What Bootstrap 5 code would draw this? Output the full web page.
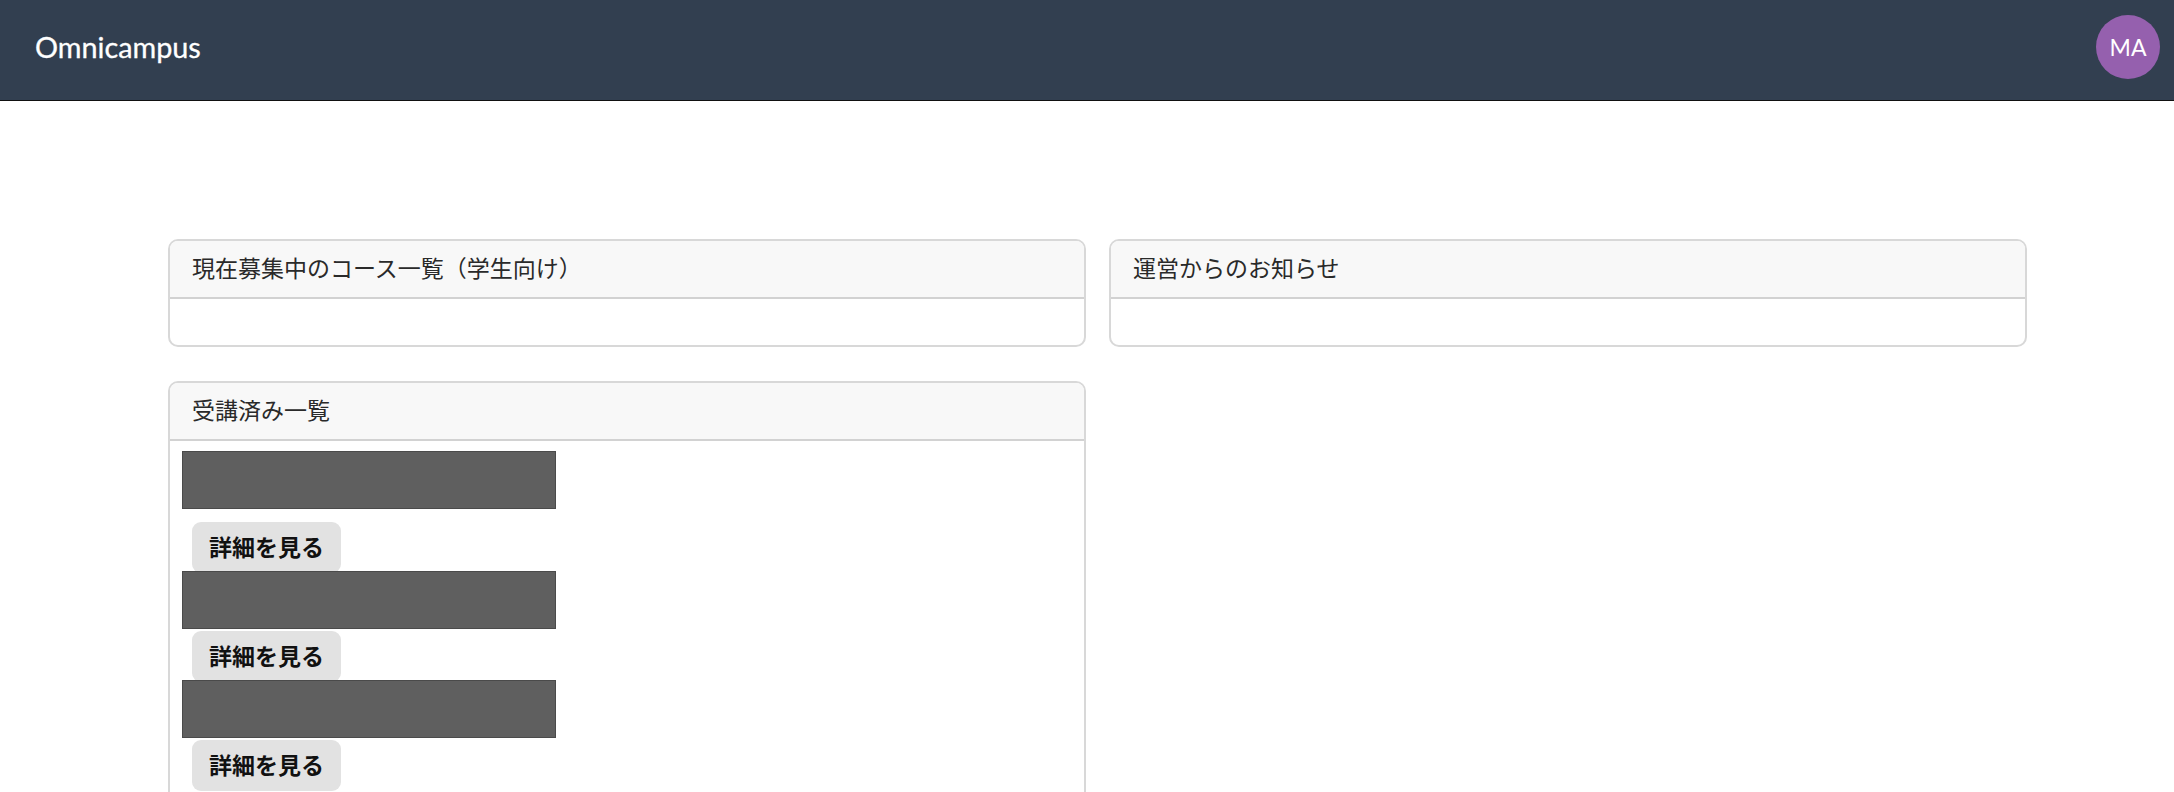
<!DOCTYPE html>
<html lang="ja">
<head>
<meta charset="utf-8">
<title>Omnicampus</title>
<link href="https://cdn.jsdelivr.net/npm/bootstrap@5.3.0/dist/css/bootstrap.min.css" rel="stylesheet">
<style>
html,body{height:792px;overflow:hidden}
body{font-family:"Lato","Noto Sans CJK JP",sans-serif;color:#212529;background:#fff}
.top-bar{height:101px;background:#323f50;border-bottom:1px solid #111;padding:0 14px 6px 35px}
.brand-name{color:#fff;font-size:28.8px;font-weight:400;padding:0;margin:2px 0 0;-webkit-text-stroke:.3px #fff}
.user-dot{width:64px;height:64px;background:#9560ae;color:#fff;font-size:23px;font-weight:400}
.page-wrap{padding:138px 147px 0 168px}
.page-grid{--bs-gutter-x:23px;--bs-gutter-y:34px}
.panel{border:2px solid #d8d8d8;border-radius:10px;--bs-card-border-color:#d8d8d8}
.panel-head{height:58px;padding:0 22px;font-size:23px;line-height:55px;font-weight:400;color:#2a2a2a;background:#f8f8f8;border-bottom:2px solid #d2d2d2;border-radius:8px 8px 0 0!important}
.panel-blank{height:46px}
.panel-body{padding:10px 12px 24px}
.thumb{width:374px;height:57.5px;background:#5f5f5f;border:1px solid #4a4a4a}
.thumb-next{margin-top:-2px}
.go-btn{display:block;width:149px;height:51px;margin-left:10px;padding:0;background:#e2e2e2;border:0;border-radius:9px;color:#111;font-size:23px;font-weight:700;line-height:51px}
.go-btn:hover{background:#e2e2e2;color:#111}
.gap-big{margin-top:13.5px}
.gap-small{margin-top:2.5px}
</style>
</head>
<body>
<nav class="navbar top-bar d-flex justify-content-between align-items-center flex-nowrap">
  <a class="navbar-brand brand-name" href="#">Omnicampus</a>
  <div class="user-dot rounded-circle d-flex align-items-center justify-content-center">MA</div>
</nav>
<main class="page-wrap">
  <div class="row page-grid">
    <div class="col-6">
      <div class="card panel">
        <div class="card-header panel-head">現在募集中のコース一覧（学生向け）</div>
        <div class="card-body panel-blank p-0"></div>
      </div>
    </div>
    <div class="col-6">
      <div class="card panel">
        <div class="card-header panel-head">運営からのお知らせ</div>
        <div class="card-body panel-blank p-0"></div>
      </div>
    </div>
    <div class="col-6">
      <div class="card panel">
        <div class="card-header panel-head">受講済み一覧</div>
        <div class="card-body panel-body">
          <div class="thumb"></div>
          <a class="btn go-btn gap-big" href="#">詳細を見る</a>
          <div class="thumb thumb-next"></div>
          <a class="btn go-btn gap-small" href="#">詳細を見る</a>
          <div class="thumb thumb-next"></div>
          <a class="btn go-btn gap-small" href="#">詳細を見る</a>
        </div>
      </div>
    </div>
  </div>
</main>
<script src="https://cdn.jsdelivr.net/npm/bootstrap@5.3.0/dist/js/bootstrap.bundle.min.js"></script>
</body>
</html>
